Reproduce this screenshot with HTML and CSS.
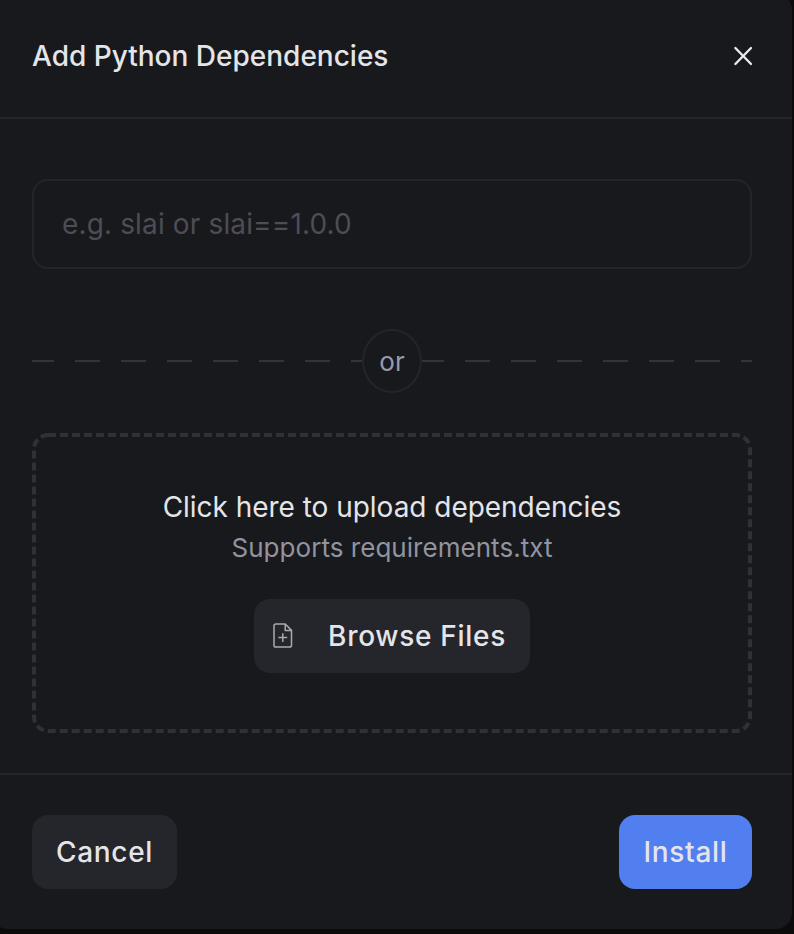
FILE: index.html
```html
<!DOCTYPE html>
<html lang="en">
<head>
<meta charset="utf-8">
<title>Add Python Dependencies</title>
<link rel="stylesheet" href="styles.css">
</head>
<body>
<main class="modal">
  <header class="modal-header">
    <h1 class="title">Add Python Dependencies</h1>
    <button class="close" aria-label="Close">
      <svg width="20" height="20" viewBox="0 0 20 20"><path d="M2.4 2 L18 18 M18 2 L2.4 18"/></svg>
    </button>
  </header>
  <section class="modal-body">
    <input class="package-input" type="text" placeholder="e.g. slai or slai==1.0.0">
    <div class="divider">
      <span class="dashes"></span>
      <span class="or">or</span>
      <span class="dashes"></span>
    </div>
    <div class="dropzone">
      <svg class="outline" width="720" height="300" viewBox="0 0 720 300"><rect x="2" y="2" width="716" height="296" rx="14"/></svg>
      <p class="lead">Click here to upload dependencies</p>
      <p class="hint">Supports requirements.txt</p>
      <button class="button browse">
        <svg class="file-icon" width="20" height="26" viewBox="0 0 20 26"><path d="M12.2 1 H2.8 Q1 1 1 2.8 V22.2 Q1 24 2.8 24 H16.7 Q18.5 24 18.5 22.2 V7.4 Z M12.2 1 V7.4 H18.5 M9.8 10.3 V18.9 M5.4 14.6 H14.2"/></svg>
        <span class="browse-label">Browse Files</span>
      </button>
    </div>
  </section>
  <footer class="modal-footer">
    <button class="button cancel">Cancel</button>
    <button class="button install">Install</button>
  </footer>
</main>
</body>
</html>
```
FILE: styles.css
```css
* { box-sizing: border-box; }
body {
  margin: 0;
  height: 934px;
  overflow: hidden;
  background: #0b0b0c;
  color: #e4e5e9;
  font-family: Inter, sans-serif;
}
button, input { font: inherit; color: inherit; }
button { border: 0; padding: 0; background: none; }
.modal {
  width: 800px;
  height: 935px;
  margin: -6px 0 0 -8px;
  border-radius: 16px;
  background: #18191c;
}
.modal-header {
  display: flex;
  justify-content: space-between;
  align-items: center;
  height: 125px;
  padding: 0 39px 0 40px;
  border-bottom: 2px solid #242529;
}
.title {
  margin: 0;
  font-size: 28px;
  line-height: 34px;
  font-weight: 500;
  letter-spacing: 0;
}
.close { display: flex; }
.close svg { fill: none; stroke: #e8e9ed; stroke-width: 2.4; stroke-linecap: round; }
.modal-body { padding: 60px 40px 40px; }
.package-input {
  display: block;
  width: 720px;
  height: 90px;
  padding: 0 28px;
  border: 2px solid #242529;
  border-radius: 16px;
  background: transparent;
  font-size: 28px;
  letter-spacing: 0.14px;
}
.package-input::placeholder { color: #4c4d55; opacity: 1; }
.divider { display: flex; align-items: center; height: 64px; margin: 60px 0 40px; }
.dashes {
  flex: 1;
  height: 2px;
  background: repeating-linear-gradient(90deg, #333433 0 22px, transparent 22px 43px, #333433 43px 46px);
}
.or {
  width: 60px;
  height: 64px;
  padding-top: 1px;
  border: 2px solid #242529;
  border-radius: 50%;
  color: #9a9ba8;
  font-size: 26px;
  line-height: 60px;
  text-align: center;
}
.dropzone {
  position: relative;
  display: flex;
  flex-direction: column;
  align-items: center;
  height: 300px;
  padding-top: 54px;
}
.outline { position: absolute; inset: 0; fill: none; stroke: #303135; stroke-width: 4; stroke-dasharray: 8 4; }
.lead, .hint { margin: 0; white-space: nowrap; }
.lead { font-size: 28px; line-height: 40px; letter-spacing: -0.03px; }
.hint { margin-top: 2px; color: #9293a0; font-size: 26px; line-height: 38px; letter-spacing: 0.04px; }
.button {
  display: flex;
  align-items: center;
  justify-content: center;
  height: 74px;
  border-radius: 16px;
  background: #25262b;
  font-size: 28px;
  font-weight: 500;
  letter-spacing: 0.7px;
}
.browse { width: 276px; margin-top: 32px; padding: 0 24px 0 19px; justify-content: space-between; }
.file-icon { fill: none; stroke: #a9aaae; stroke-width: 1.5; stroke-linejoin: round; }
.modal-footer {
  display: flex;
  justify-content: space-between;
  padding: 40px;
  border-top: 2px solid #242529;
}
.cancel { width: 145px; }
.install { width: 133px; background: #527ff0; }
```
